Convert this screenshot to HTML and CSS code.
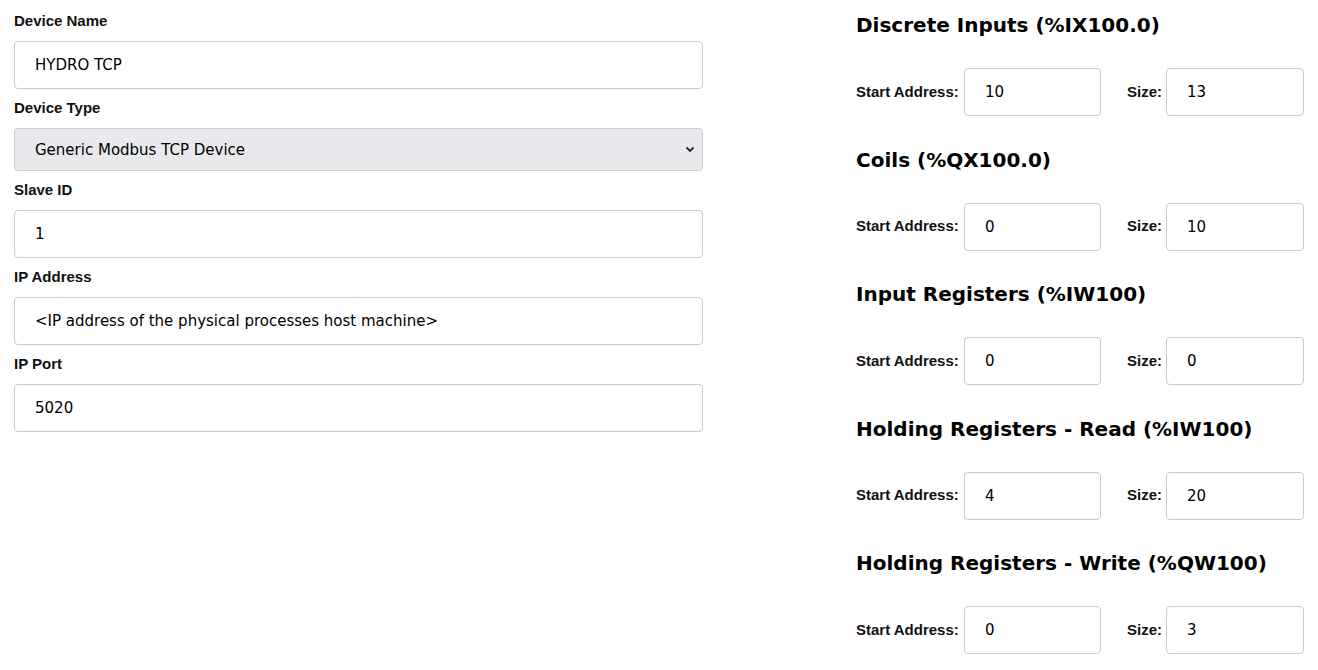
FILE: index.html
```html
<!DOCTYPE html>
<html>
<head>
<meta charset="utf-8">
<link rel="stylesheet" href="styles.css">
</head>
<body>
<div class="page">
  <div class="device">
    <label class="field-label">Device Name</label>
    <input class="field" type="text" value="HYDRO TCP">
    <label class="field-label">Device Type</label>
    <div class="select-wrap">
      <select class="field select">
        <option>Generic Modbus TCP Device</option>
      </select>
      <svg class="chev" width="10" height="7" viewBox="0 0 10 7"><path d="M1.5 1.5 L5 5 L8.5 1.5" fill="none" stroke="#222" stroke-width="1.8"/></svg>
    </div>
    <label class="field-label">Slave ID</label>
    <input class="field" type="text" value="1">
    <label class="field-label">IP Address</label>
    <input class="field" type="text" value="&lt;IP address of the physical processes host machine&gt;">
    <label class="field-label">IP Port</label>
    <input class="field" type="text" value="5020">
  </div>
  <div class="registers">
    <section class="reg">
      <h2>Discrete Inputs (%IX100.0)</h2>
      <div class="row">
        <label class="lbl">Start Address:</label><input class="box" type="text" value="10">
        <label class="lbl size">Size:</label><input class="box box2" type="text" value="13">
      </div>
    </section>
    <section class="reg">
      <h2>Coils (%QX100.0)</h2>
      <div class="row">
        <label class="lbl">Start Address:</label><input class="box" type="text" value="0">
        <label class="lbl size">Size:</label><input class="box box2" type="text" value="10">
      </div>
    </section>
    <section class="reg">
      <h2>Input Registers (%IW100)</h2>
      <div class="row">
        <label class="lbl">Start Address:</label><input class="box" type="text" value="0">
        <label class="lbl size">Size:</label><input class="box box2" type="text" value="0">
      </div>
    </section>
    <section class="reg">
      <h2>Holding Registers - Read (%IW100)</h2>
      <div class="row">
        <label class="lbl">Start Address:</label><input class="box" type="text" value="4">
        <label class="lbl size">Size:</label><input class="box box2" type="text" value="20">
      </div>
    </section>
    <section class="reg">
      <h2>Holding Registers - Write (%QW100)</h2>
      <div class="row">
        <label class="lbl">Start Address:</label><input class="box" type="text" value="0">
        <label class="lbl size">Size:</label><input class="box box2" type="text" value="3">
      </div>
    </section>
  </div>
</div>
</body>
</html>
```

FILE: styles.css
```css
* { box-sizing: border-box; }
html, body { margin: 0; padding: 0; background: #fff; }
body { font-family: "DejaVu Sans", sans-serif; color: #000; overflow: hidden; }
.page {
  display: flex;
  padding: 2px 14px 0 14px;
}
.device {
  width: 689px;
  display: flex;
  flex-direction: column;
}
.field-label {
  display: block;
  font-family: "Liberation Sans", Arial, sans-serif;
  font-weight: bold;
  font-size: 15px;
  line-height: 17px;
  margin: 10px 0 12px;
  color: #111;
}
.field {
  display: block;
  width: 100%;
  height: 48px;
  padding: 0 20px;
  border: 1px solid #cbcbcb;
  border-radius: 4px;
  font-family: "DejaVu Sans", sans-serif;
  font-size: 15px;
  color: #000;
  background: #fff;
  outline: none;
}
.select-wrap { position: relative; }
.select {
  height: 43px;
  appearance: none;
  -webkit-appearance: none;
  background: #e9e9ed;
}
.chev { position: absolute; right: 8px; top: 18px; }
.registers {
  margin-left: auto;
  width: 448px;
  padding-top: 9px;
}
.reg h2 {
  margin: 0;
  font-family: "DejaVu Sans", sans-serif;
  font-weight: bold;
  font-size: 20px;
  line-height: 28px;
  height: 28px;
}
.row {
  display: flex;
  align-items: center;
  margin-top: 29px;
  margin-bottom: 29.5px;
}
.lbl {
  font-family: "Liberation Sans", Arial, sans-serif;
  font-weight: bold;
  font-size: 15px;
  line-height: 17px;
  padding-bottom: 2px;
  width: 108px;
  color: #111;
}
.lbl.size { width: 65px; padding-left: 26px; }
.box {
  width: 137px;
  height: 48px;
  padding: 0 20px;
  border: 1px solid #cbcbcb;
  border-radius: 4px;
  font-family: "DejaVu Sans", sans-serif;
  font-size: 15px;
  color: #000;
  outline: none;
}
.box2 { width: 138px; }
```
